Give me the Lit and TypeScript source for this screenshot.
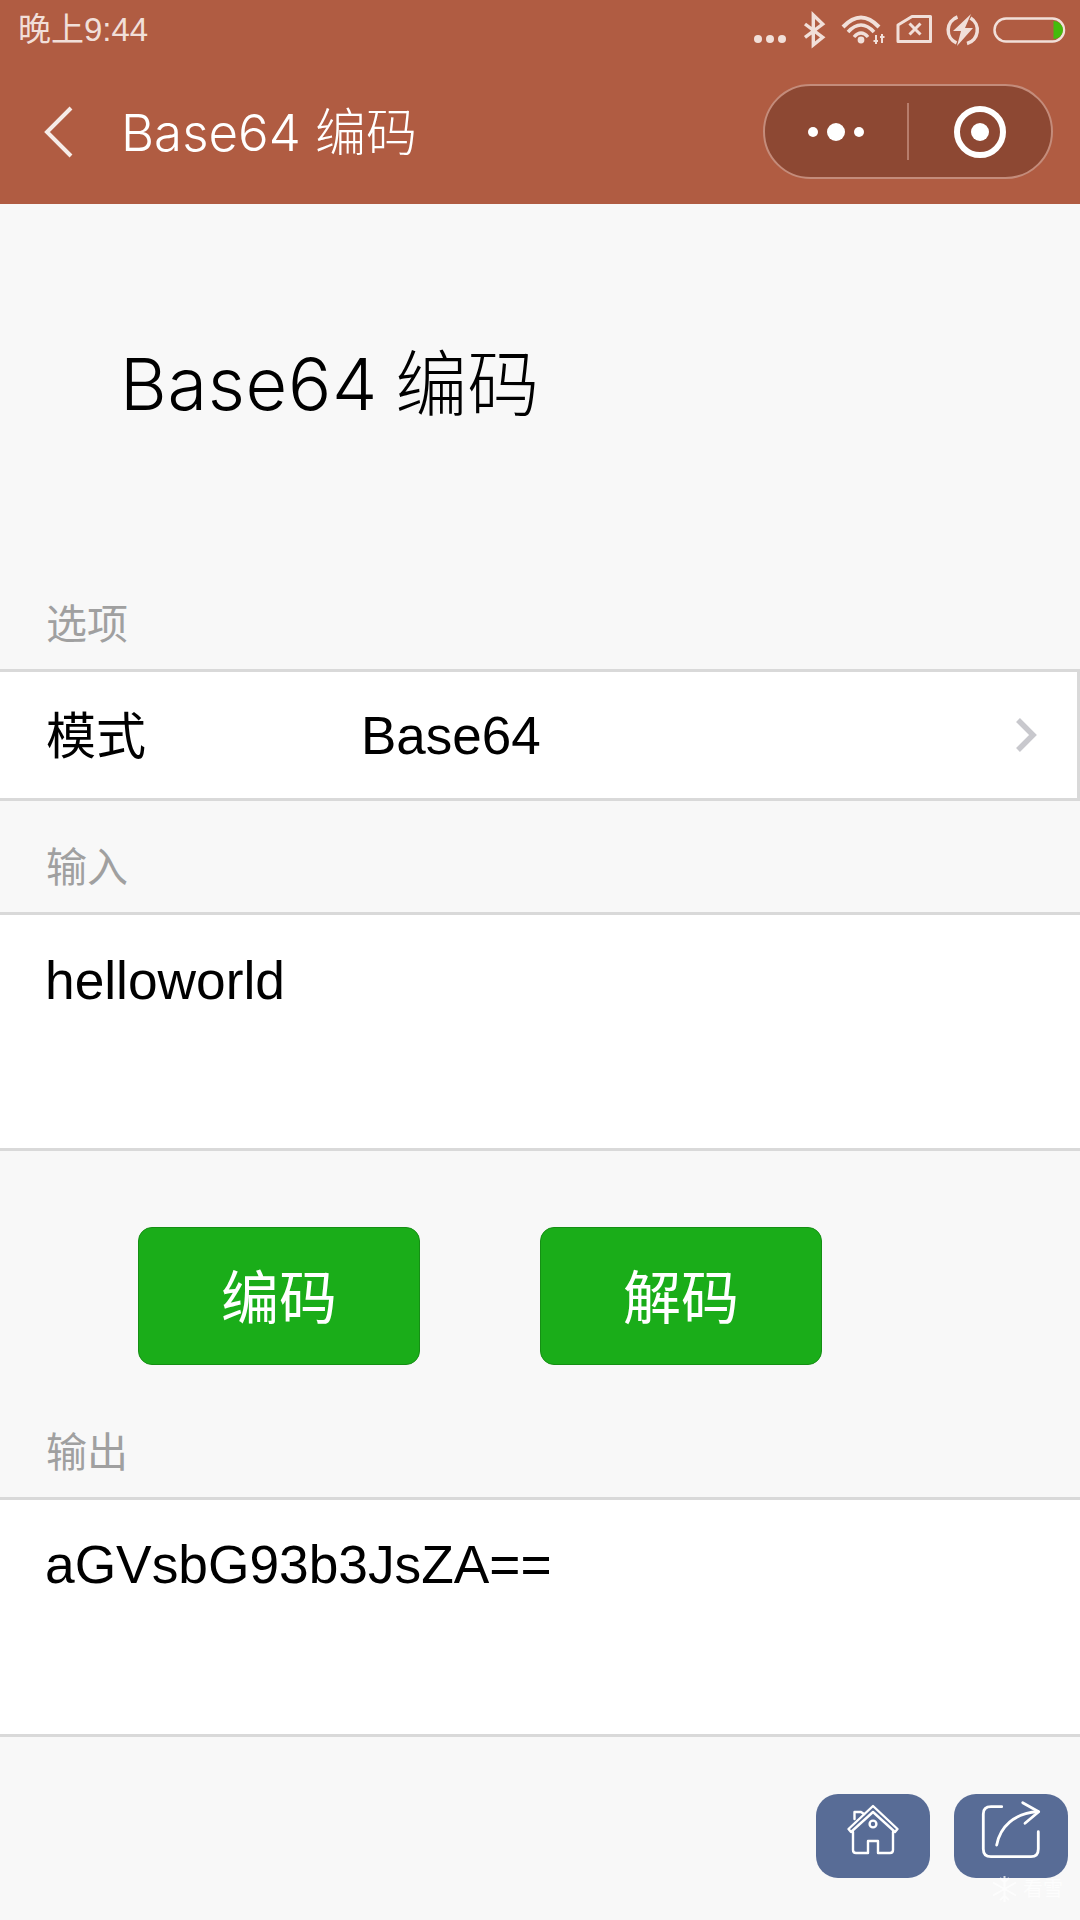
import { LitElement, html, css, svg } from "lit";
import { customElement } from "lit/decorators.js";

@customElement("app-root")
export class AppRoot extends LitElement {
  static styles = css`
    :host {
      display: block;
      position: relative;
      width: 1080px;
      height: 1920px;
      overflow: hidden;
      background: #f8f8f8;
      color: #000;
      font-family: "Liberation Sans", "Noto Sans CJK SC", sans-serif;
    }
    .top { height: 204px; background: #b05c42; display: flex; flex-direction: column; }
    .status {
      height: 60px;
      padding: 0 14px 0 18px;
      display: flex;
      align-items: center;
      justify-content: space-between;
      color: #f1dfd9;
      font-size: 33px;
    }
    .status-time { line-height: 60px; }
    .status-icons { display: block; width: 340px; height: 60px; flex: none; }
    .nav { flex: 1; display: flex; align-items: center; padding: 0 27px 1px 43px; }
    .back { width: 32px; height: 54px; flex: none; display: block; }
    .nav-title {
      margin-left: 46px;
      padding-top: 3px;
      flex: 1;
      color: #fff;
      font-family: "Inter", "Noto Sans CJK SC", sans-serif;
      font-weight: 300;
      font-size: 51px;
      line-height: 60px;
      white-space: nowrap;
    }
    .capsule {
      width: 290px;
      height: 95px;
      box-sizing: border-box;
      flex: none;
      display: flex;
      align-items: center;
      border-radius: 48px;
      border: 2px solid #c48c7b;
      background: #8d4833;
    }
    .cap-half { flex: 1; display: flex; align-items: center; justify-content: center; }
    .cap-sep { width: 2px; height: 57px; background: #b77d6c; flex: none; }
    .cap-more { display: block; width: 58px; height: 20px; }
    .cap-rec { display: block; width: 52px; height: 52px; }
    .heading {
      padding: 138px 0 0 120px;
      height: 395px;
      box-sizing: border-box;
      font-family: "Inter", "Noto Sans CJK SC", sans-serif;
      font-weight: 300;
      font-size: 72px;
      line-height: 84px;
      white-space: nowrap;
    }
    .heading-latin { letter-spacing: 0.7px; margin-right: -3px; }
    .label { padding: 2px 0 20px 46px; color: #a0a0a0; font-size: 41px; line-height: 48px; }
    .label-gap { margin-top: 41px; }
    .sect { background: #fff; border-top: 3px solid #d9d9d9; border-bottom: 3px solid #d9d9d9; box-sizing: border-box; }
    .row {
      height: 126px;
      display: flex;
      align-items: center;
      padding: 0 38px 0 46px;
      border-right: 3px solid #d9d9d9;
      font-size: 50px;
    }
    .row-key { width: 315px; flex: none; padding-bottom: 7px; }
    .row-val { flex: 1; font-size: 53px; }
    .chev { display: block; width: 24px; height: 36px; flex: none; }
    .area { height: 234px; padding: 33px 45px 0; box-sizing: border-box; font-size: 53.3px; line-height: 64px; }
    .area.input { height: 233px; padding-top: 34px; }
    .btns { display: flex; gap: 120px; padding: 76px 0 0 138px; height: 276px; box-sizing: border-box; }
    .btn {
      width: 282px;
      height: 138px;
      padding-bottom: 5px;
      box-sizing: border-box;
      display: flex;
      align-items: center;
      justify-content: center;
      border-radius: 14px;
      background: #1aad19;
      border: 1px solid #158f14;
      color: #fff;
      font-size: 58px;
    }
    .float {
      position: absolute;
      top: 1794px;
      width: 114px;
      height: 84px;
      border-radius: 22px;
      background: #586c96;
    }
    .float.home { left: 816px; }
    .float.share { left: 954px; }
    .float svg { display: block; width: 114px; height: 84px; }
    .ico { fill: none; stroke: #fff; stroke-linejoin: round; stroke-linecap: round; }
    .mark {
      position: absolute;
      left: 991px;
      top: 1875px;
      display: flex;
      align-items: center;
      gap: 5px;
      color: #fff;
      opacity: .75;
      font-size: 20px;
      line-height: 28px;
    }
    .mark svg { display: block; width: 27px; height: 28px; }
  `;

  private statusIcons() {
    return svg`
      <g fill="#f1dfd9">
        <circle cx="32" cy="39" r="4"/><circle cx="44" cy="39" r="4"/><circle cx="56" cy="39" r="4"/>
      </g>
      <path d="M79 24 L96.700 37.300 L87.300 45 V15 L96.700 24 L79 37.300" fill="none" stroke="#f1dfd9" stroke-width="3.400"/>
      <g fill="none" stroke="#f1dfd9">
        <path d="M117 27 Q135 8 153 27" stroke-width="4"/>
        <path d="M122 32 Q135 18 148 32" stroke-width="3.600"/>
        <path d="M128 37 Q135 29 142 37" stroke-width="3.400"/>
      </g>
      <circle cx="135" cy="40" r="3.400" fill="#f1dfd9"/>
      <path d="M150 35 V44 M147.500 41 H152 M156 34 V43 M154 37 H158.500" stroke="#f1dfd9" stroke-width="2" fill="none"/>
      <path d="M172 25 L186 16.500 H204.500 V41.500 H172 Z" fill="none" stroke="#f1dfd9" stroke-width="3" stroke-linejoin="round"/>
      <path d="M183.500 23.500 L194.500 34.500 M194.500 23.500 L183.500 34.500" stroke="#f1dfd9" stroke-width="3" fill="none"/>
      <path d="M231.500 17 A14 14 0 0 0 230.500 43 M241 43.500 A14 14 0 0 0 244.500 18" fill="none" stroke="#f1dfd9" stroke-width="3.500"/>
      <path d="M245 14 L227 31 H235 L231 46 L247 28 H239 Z" fill="#f1dfd9"/>
      <rect x="268.500" y="18.500" width="69.500" height="23" rx="11.500" fill="none" stroke="#f1dfd9" stroke-width="2.500"/>
      <path d="M327.500 21 H328 A9 9 0 0 1 328 39 H327.500 Z" fill="#44bb0c"/>
    `;
  }

  render() {
    return html`
      <div class="top">
        <div class="status">
          <span class="status-time">晚上9:44</span>
          <svg class="status-icons" viewBox="0 0 340 60">${this.statusIcons()}</svg>
        </div>
        <div class="nav">
          <svg class="back" viewBox="0 0 32 54"><path d="M28 3 L4 27 L28 51" fill="none" stroke="#f6ece8" stroke-width="4"/></svg>
          <div class="nav-title">Base64 编码</div>
          <div class="capsule">
            <div class="cap-half">
              <svg class="cap-more" viewBox="0 0 58 20"><circle cx="6" cy="10" r="5" fill="#fff"/><circle cx="29" cy="10" r="9" fill="#fff"/><circle cx="52" cy="10" r="5" fill="#fff"/></svg>
            </div>
            <div class="cap-sep"></div>
            <div class="cap-half">
              <svg class="cap-rec" viewBox="0 0 52 52"><circle cx="26" cy="26" r="23" fill="none" stroke="#fff" stroke-width="6"/><circle cx="26" cy="26" r="9" fill="#fff"/></svg>
            </div>
          </div>
        </div>
      </div>
      <div class="heading"><span class="heading-latin">Base64</span> 编码</div>
      <div class="label">选项</div>
      <div class="sect">
        <div class="row">
          <div class="row-key">模式</div>
          <div class="row-val">Base64</div>
          <svg class="chev" viewBox="0 0 24 36"><path d="M3 3 L18 18 L3 33" fill="none" stroke="#c8c8cd" stroke-width="5.500"/></svg>
        </div>
      </div>
      <div class="label label-gap">输入</div>
      <div class="sect"><div class="area input">helloworld</div></div>
      <div class="btns">
        <div class="btn">编码</div>
        <div class="btn">解码</div>
      </div>
      <div class="label">输出</div>
      <div class="sect"><div class="area">aGVsbG93b3JsZA==</div></div>
      <div class="float home">
        <svg viewBox="0 0 114 84" class="ico" stroke-width="2.400">
          <path d="M32.500 35 L57 12 L81.500 35 L79 38 L57 18 L35 38 Z"/>
          <path d="M38.500 25 V18 H45 L48 20"/>
          <path d="M37 38 V56 Q37 59 40 59 H52 V47 H62 V59 H74 Q77 59 77 56 V38"/>
          <circle cx="57" cy="30" r="3.400"/>
        </svg>
      </div>
      <div class="float share">
        <svg viewBox="0 0 114 84" class="ico" stroke-width="2.800">
          <path d="M47.700 12.700 H37 Q29.300 12.700 29.300 20 V55 Q29.300 62.700 37 62.700 H77 Q84.300 62.700 84.300 55 V37.700"/>
          <path d="M42.700 51 C46 33 60 19 84 17.700"/>
          <path d="M68.700 8.700 L84.700 17.700 L71 29.300"/>
        </svg>
      </div>
      <div class="mark">
        <svg viewBox="0 0 27 28" fill="none" stroke="#fff" stroke-width="2"><path d="M13.500 1 V27 M2 7.500 L25 20.500 M25 7.500 L2 20.500 M9 3 L13.500 7 L18 3 M9 25 L13.500 21 L18 25"/></svg>
        <span>看雪</span>
      </div>
    `;
  }
}
